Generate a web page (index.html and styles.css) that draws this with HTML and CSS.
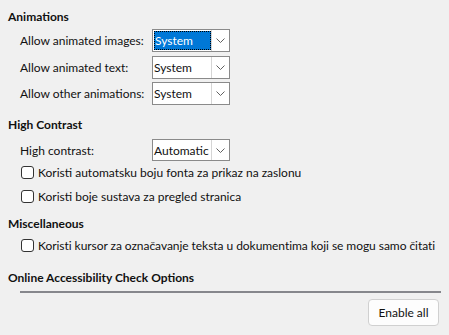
FILE: index.html
```html
<!DOCTYPE html>
<html>
<head>
<meta charset="utf-8">
<link rel="stylesheet" href="styles.css">
</head>
<body>
<div class="page">
  <section class="sec sec-anim">
    <div class="head">Animations</div>
    <div class="body rows">
      <div class="row"><span class="lbl">Allow animated images:</span>
        <div class="combo"><span class="val sel"><span class="focus">System</span></span><span class="btn"><svg width="9" height="5" viewBox="0 0 9 5"><path d="M0.5 0.5 L4.5 4.5 L8.5 0.5" fill="none" stroke="#606060" stroke-width="1"/></svg></span></div></div>
      <div class="row"><span class="lbl">Allow animated text:</span>
        <div class="combo"><span class="val">System</span><span class="btn"><svg width="9" height="5" viewBox="0 0 9 5"><path d="M0.5 0.5 L4.5 4.5 L8.5 0.5" fill="none" stroke="#606060" stroke-width="1"/></svg></span></div></div>
      <div class="row"><span class="lbl">Allow other animations:</span>
        <div class="combo"><span class="val">System</span><span class="btn"><svg width="9" height="5" viewBox="0 0 9 5"><path d="M0.5 0.5 L4.5 4.5 L8.5 0.5" fill="none" stroke="#606060" stroke-width="1"/></svg></span></div></div>
    </div>
  </section>
  <section class="sec sec-hc">
    <div class="head">High Contrast</div>
    <div class="body">
      <div class="row"><span class="lbl">High contrast:</span>
        <div class="combo"><span class="val">Automatic</span><span class="btn"><svg width="9" height="5" viewBox="0 0 9 5"><path d="M0.5 0.5 L4.5 4.5 L8.5 0.5" fill="none" stroke="#606060" stroke-width="1"/></svg></span></div></div>
      <label class="check"><span class="box"></span>Koristi automatsku boju fonta za prikaz na zaslonu</label>
      <label class="check"><span class="box"></span>Koristi boje sustava za pregled stranica</label>
    </div>
  </section>
  <section class="sec sec-misc">
    <div class="head">Miscellaneous</div>
    <div class="body">
      <label class="check"><span class="box"></span>Koristi kursor za označavanje teksta u dokumentima koji se mogu samo čitati</label>
    </div>
  </section>
  <section class="sec sec-online">
    <div class="head">Online Accessibility Check Options</div>
    <div class="body">
      <div class="rule"></div>
      <div class="actions"><button class="button">Enable all</button></div>
    </div>
  </section>
</div>
</body>
</html>
```

FILE: styles.css
```css
html, body {
  margin: 0;
  padding: 0;
  background: #f0f0f0;
}
body {
  font-family: Lato, "Noto Sans", sans-serif;
  font-size: 12px;
  color: #111;
  width: 449px;
  height: 335px;
  overflow: hidden;
  white-space: nowrap;
}
.page {
  padding: 9px 8px 0 8px;
}
.head {
  font-weight: bold;
  line-height: 16px;
  height: 16px;
}
.body {
  padding-left: 12px;
}
.rows {
  display: flex;
  flex-direction: column;
  gap: 3.5px;
  margin-top: 4px;
}
.row {
  display: flex;
  align-items: center;
  height: 23px;
}
.lbl {
  width: 132px;
}
.combo {
  display: flex;
  width: 78px;
  height: 23px;
  box-sizing: border-box;
  border: 1px solid #8a8a8a;
  background: #fff;
}
.val {
  flex: 1;
  display: flex;
  align-items: center;
  padding-left: 1px;
  overflow: hidden;
}
.val.sel {
  background: #0078d7;
  color: #fff;
  margin: 1px 0 1px 1px;
  padding: 0;
}
.focus {
  flex: 1;
  align-self: stretch;
  display: flex;
  align-items: center;
  padding-left: 1px;
  outline: 1px dotted #000;
  outline-offset: -1px;
}
.btn {
  width: 17px;
  flex: none;
  border-left: 1px solid #d5d5d5;
  display: flex;
  align-items: center;
  justify-content: center;
}
.sec-hc { margin-top: 12px; }
.sec-hc .row { margin-top: 6px; margin-bottom: -1px; height: 22px; }
.sec-hc .combo { height: 22px; }
.check {
  display: flex;
  align-items: center;
  height: 24px;
}
.sec-misc .check {
  letter-spacing: -0.05px;
}
.box {
  width: 11px;
  height: 11px;
  border: 1px solid #333;
  border-radius: 3px;
  background: #fff;
  margin-right: 4px;
  margin-left: 1px;
  flex: none;
}
.sec-misc { margin-top: 8px; }
.sec-misc .body { margin-top: 1px; }
.sec-online { margin-top: 13px; }
.rule {
  height: 2px;
  background: #86878c;
  margin-top: 5px;
}
.actions {
  display: flex;
  justify-content: flex-end;
  padding-top: 6px;
  padding-right: 2px;
}
.button {
  font: inherit;
  width: 71px;
  height: 27px;
  background: #fdfdfd;
  border: 1px solid #d0d0d0;
  border-radius: 4px;
  color: #111;
  padding: 0;
}
```
